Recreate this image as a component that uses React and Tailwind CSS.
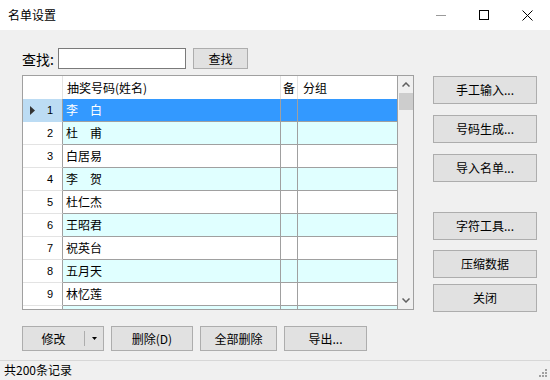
import React from "react";

const rows = [
  "李　白",
  "杜　甫",
  "白居易",
  "李　贺",
  "杜仁杰",
  "王昭君",
  "祝英台",
  "五月天",
  "林忆莲",
  "",
];

const font = { fontFamily: '"Noto Sans CJK SC", "Noto Sans", sans-serif' };

function Btn({ children, className = "" }) {
  return (
    <div
      className={
        "flex items-center justify-center bg-[#e1e1e1] border border-[#adadad] text-[12px] text-black " +
        className
      }
    >
      {children}
    </div>
  );
}

export default function App() {
  return (
    <div
      className="w-[550px] h-[380px] flex flex-col overflow-hidden bg-[#f0f0f0] text-black"
      style={font}
    >
      {/* Title bar */}
      <div className="h-[30px] bg-white flex items-center relative shrink-0">
        <span className="pl-[8px] text-[12px]">名单设置</span>
        <div className="ml-auto flex items-center h-full">
          <div className="w-[46px] h-full flex items-center justify-center">
            <div className="w-[10px] h-px bg-[#9a9a9a]" />
          </div>
          <div className="w-[40px] h-full flex items-center justify-center">
            <div className="w-[10px] h-[10px] border border-black" />
          </div>
          <div className="w-[46px] h-full flex items-center justify-center">
            <svg width="11" height="11" viewBox="0 0 11 11">
              <path d="M0.5 0.5 L10.5 10.5 M10.5 0.5 L0.5 10.5" stroke="#000" strokeWidth="1" />
            </svg>
          </div>
        </div>
      </div>

      {/* Search row */}
      <div className="flex items-center pl-[22px] mt-[18px] h-[21px]">
        <span className="text-[14px] leading-none w-[36px]">查找:</span>
        <div className="w-[128px] h-[21px] bg-white border border-[#7a7a7a]" />
        <Btn className="ml-[7px] w-[55px] h-[21px]">查找</Btn>
      </div>

      {/* Grid + right buttons */}
      <div className="flex pl-[22px] mt-[6px]">
        <div className="w-[392px] h-[235px] border border-[#a0a0a0] bg-[#f0f0f0] flex overflow-hidden">
          <div className="w-[374px] flex flex-col bg-white overflow-hidden">
            {/* header */}
            <div className="flex h-[23px] shrink-0 text-[12px] bg-white">
              <div className="w-[40px] border-r border-[#e3e3e3]" />
              <div className="w-[218px] border-r border-[#e3e3e3] pl-[4px] flex items-center">
                抽奖号码(姓名)
              </div>
              <div className="w-[17px] border-r border-[#e3e3e3] overflow-hidden flex items-center justify-center">
                <span className="text-[12px]">备</span>
              </div>
              <div className="flex-1 pl-[5px] flex items-center">分组</div>
            </div>
            {rows.map((name, i) => {
              const sel = i === 0;
              const bg = sel ? "bg-[#3399ff] text-white" : i % 2 === 1 ? "bg-[#e0ffff]" : "bg-white";
              return (
                <div key={i} className="flex h-[23px] shrink-0 text-[12px]">
                  <div
                    className={
                      "w-[40px] border-r border-[#a0a0a0] border-b relative flex items-center justify-end pr-[9px] " +
                      (sel ? "bg-[#bcdcf4] border-b-[#bcdcf4]" : "bg-white border-b-[#e3e3e3]")
                    }
                    style={{ fontFamily: '"Liberation Sans", sans-serif' }}
                  >
                    {sel && (
                      <svg className="absolute left-[7px] top-[7px]" width="5" height="9" viewBox="0 0 5 9">
                        <path d="M0 0 L5 4.5 L0 9 Z" fill="#333" />
                      </svg>
                    )}
                    {i < 9 && <span className="text-[11px]">{i + 1}</span>}
                  </div>
                  <div className={"w-[218px] border-r border-b border-[#a0a0a0] pl-[3px] flex items-center " + bg}>
                    {name}
                  </div>
                  <div className={"w-[17px] border-r border-b border-[#a0a0a0] " + bg} />
                  <div className={"flex-1 border-b border-[#a0a0a0] " + bg} />
                </div>
              );
            })}
          </div>
          {/* scrollbar */}
          <div className="flex-1 border-l border-[#a0a0a0] bg-[#f0f0f0] flex flex-col items-center">
            <div className="h-[17px] flex items-center justify-center w-full">
              <svg width="8" height="5" viewBox="0 0 8 5">
                <path d="M0.5 4.5 L4 1 L7.5 4.5" stroke="#606060" strokeWidth="1.5" fill="none" />
              </svg>
            </div>
            <div className="w-[14px] h-[17px] bg-[#cdcdcd]" />
            <div className="flex-1" />
            <div className="h-[17px] flex items-center justify-center w-full">
              <svg width="8" height="5" viewBox="0 0 8 5">
                <path d="M0.5 0.5 L4 4 L7.5 0.5" stroke="#606060" strokeWidth="1.5" fill="none" />
              </svg>
            </div>
          </div>
        </div>

        <div className="ml-[19px] w-[104px] flex flex-col">
          <Btn className="mt-[1px] h-[28px]">手工输入...</Btn>
          <Btn className="mt-[11px] h-[28px]">号码生成...</Btn>
          <Btn className="mt-[11px] h-[28px]">导入名单...</Btn>
          <Btn className="mt-[30px] h-[28px]">字符工具...</Btn>
          <Btn className="mt-[10px] h-[28px]">压缩数据</Btn>
          <Btn className="mt-[6px] h-[28px]">关闭</Btn>
        </div>
      </div>

      {/* Bottom buttons */}
      <div className="flex pl-[22px] mt-[14px] h-[25px]">
        <div className="w-[82px] h-[25px] flex bg-[#e1e1e1] border border-[#adadad] text-[12px]">
          <div className="w-[61px] flex items-center justify-center">修改</div>
          <div className="my-[4px] w-px bg-[#adadad]" />
          <div className="flex-1 flex items-center justify-center">
            <svg width="5" height="3" viewBox="0 0 5 3">
              <path d="M0 0 L5 0 L2.5 3 Z" fill="#000" />
            </svg>
          </div>
        </div>
        <Btn className="ml-[7px] w-[82px] h-[25px]">删除(D)</Btn>
        <Btn className="ml-[7px] w-[77px] h-[25px]">全部删除</Btn>
        <Btn className="ml-[7px] w-[83px] h-[25px]">导出...</Btn>
      </div>

      {/* Status bar */}
      <div className="mt-[9px] border-t border-[#d7d7d7] flex-1 flex items-center relative">
        <span className="pl-[4px] text-[12px] -mt-[2px]">共200条记录</span>
        <svg className="absolute right-[2px] bottom-[2px]" width="9" height="9" viewBox="0 0 9 9">
          <rect x="6" y="0" width="2" height="2" fill="#a0a0a0" />
          <rect x="3" y="3" width="2" height="2" fill="#a0a0a0" />
          <rect x="6" y="3" width="2" height="2" fill="#a0a0a0" />
          <rect x="0" y="6" width="2" height="2" fill="#a0a0a0" />
          <rect x="3" y="6" width="2" height="2" fill="#a0a0a0" />
          <rect x="6" y="6" width="2" height="2" fill="#a0a0a0" />
        </svg>
      </div>
    </div>
  );
}
